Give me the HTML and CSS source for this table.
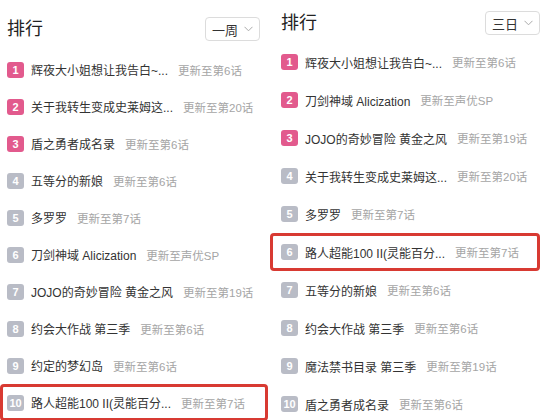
FILE: index.html
```html
<!DOCTYPE html>
<html lang="zh">
<head>
<meta charset="utf-8">
<link rel="stylesheet" href="styles.css">
</head>
<body>
<div class="page">
  <section class="panel panel-left">
    <header class="head">
      <h1 class="title">排行</h1>
      <div class="select"><span>一周</span><svg class="chev" width="9" height="6" viewBox="0 0 9 6"><path d="M0.5 0.8 L4.5 4.8 L8.5 0.8" fill="none" stroke="#aaa" stroke-width="1"/></svg></div>
    </header>
    <ul class="list">
      <li class="row"><span class="badge hot">1</span><span class="name">辉夜大小姐想让我告白~...</span><span class="upd">更新至第6话</span></li>
      <li class="row"><span class="badge hot">2</span><span class="name">关于我转生变成史莱姆这...</span><span class="upd">更新至第20话</span></li>
      <li class="row"><span class="badge hot">3</span><span class="name">盾之勇者成名录</span><span class="upd">更新至第6话</span></li>
      <li class="row"><span class="badge">4</span><span class="name">五等分的新娘</span><span class="upd">更新至第6话</span></li>
      <li class="row"><span class="badge">5</span><span class="name">多罗罗</span><span class="upd">更新至第7话</span></li>
      <li class="row"><span class="badge">6</span><span class="name">刀剑神域 Alicization</span><span class="upd">更新至声优SP</span></li>
      <li class="row"><span class="badge">7</span><span class="name">JOJO的奇妙冒险 黄金之风</span><span class="upd">更新至第19话</span></li>
      <li class="row"><span class="badge">8</span><span class="name">约会大作战 第三季</span><span class="upd">更新至第6话</span></li>
      <li class="row"><span class="badge">9</span><span class="name">约定的梦幻岛</span><span class="upd">更新至第6话</span></li>
      <li class="row mark mark-left"><span class="badge">10</span><span class="name">路人超能100 II(灵能百分...</span><span class="upd">更新至第7话</span></li>
    </ul>
  </section>
  <section class="panel panel-right">
    <header class="head">
      <h1 class="title">排行</h1>
      <div class="select"><span>三日</span><svg class="chev" width="9" height="6" viewBox="0 0 9 6"><path d="M0.5 0.8 L4.5 4.8 L8.5 0.8" fill="none" stroke="#aaa" stroke-width="1"/></svg></div>
    </header>
    <ul class="list">
      <li class="row"><span class="badge hot">1</span><span class="name">辉夜大小姐想让我告白~...</span><span class="upd">更新至第6话</span></li>
      <li class="row"><span class="badge hot">2</span><span class="name">刀剑神域 Alicization</span><span class="upd">更新至声优SP</span></li>
      <li class="row"><span class="badge hot">3</span><span class="name">JOJO的奇妙冒险 黄金之风</span><span class="upd">更新至第19话</span></li>
      <li class="row"><span class="badge">4</span><span class="name">关于我转生变成史莱姆这...</span><span class="upd">更新至第20话</span></li>
      <li class="row"><span class="badge">5</span><span class="name">多罗罗</span><span class="upd">更新至第7话</span></li>
      <li class="row mark mark-right"><span class="badge">6</span><span class="name">路人超能100 II(灵能百分...</span><span class="upd">更新至第7话</span></li>
      <li class="row"><span class="badge">7</span><span class="name">五等分的新娘</span><span class="upd">更新至第6话</span></li>
      <li class="row"><span class="badge">8</span><span class="name">约会大作战 第三季</span><span class="upd">更新至第6话</span></li>
      <li class="row"><span class="badge">9</span><span class="name">魔法禁书目录 第三季</span><span class="upd">更新至第19话</span></li>
      <li class="row"><span class="badge">10</span><span class="name">盾之勇者成名录</span><span class="upd">更新至第6话</span></li>
    </ul>
  </section>
</div>
</body>
</html>
```

FILE: styles.css
```css
* { box-sizing: border-box; }
html, body {
  margin: 0;
  padding: 0;
  background: #fff;
  width: 540px;
  height: 420px;
  overflow: hidden;
}
body {
  font-family: "Liberation Sans", "Noto Sans CJK SC", sans-serif;
  color: #333;
}
.page {
  display: flex;
  width: 540px;
  height: 420px;
}
.panel {
  width: 270px;
  display: flex;
  flex-direction: column;
}
.panel-left {
  padding: 17px 10px 0 7px;
}
.panel-right {
  padding: 11px 0 0 11px;
}
.head {
  display: flex;
  align-items: center;
  justify-content: space-between;
  height: 24px;
}
.title {
  margin: 0;
  font-size: 18px;
  font-weight: normal;
  color: #222;
  line-height: 24px;
}
.select {
  width: 55px;
  height: 24px;
  border: 1px solid #dcdcdc;
  border-radius: 4px;
  display: flex;
  align-items: center;
  justify-content: center;
  gap: 6px;
  font-size: 13px;
  color: #333;
}
.chev { display: block; }
.list {
  list-style: none;
  margin: 0;
  padding: 0;
}
.panel-left .list { margin-top: 10px; }
.panel-right .list { margin-top: 8px; }
.row {
  display: flex;
  align-items: center;
  white-space: nowrap;
}
.panel-left .row { height: 37px; }
.panel-right .row { height: 38px; }
.badge {
  width: 17px;
  height: 16px;
  border-radius: 3px;
  background: #b9bcc6;
  color: #fff;
  font-size: 11px;
  font-weight: bold;
  display: flex;
  align-items: center;
  justify-content: center;
  flex: none;
}
.badge.hot { background: #e25a8d; }
.name {
  margin-left: 7px;
  font-size: 12px;
  color: #333;
}
.upd {
  margin-left: 10px;
  font-size: 11.5px;
  color: #a5a5a5;
}
.mark {
  border: 3px solid #d83a32;
  border-radius: 4px;
}
.mark-left {
  margin-left: -7px;
  padding-left: 4px;
  width: 268px;
}
.mark-right {
  margin-left: -11px;
  padding-left: 8px;
  width: 270px;
}
```
